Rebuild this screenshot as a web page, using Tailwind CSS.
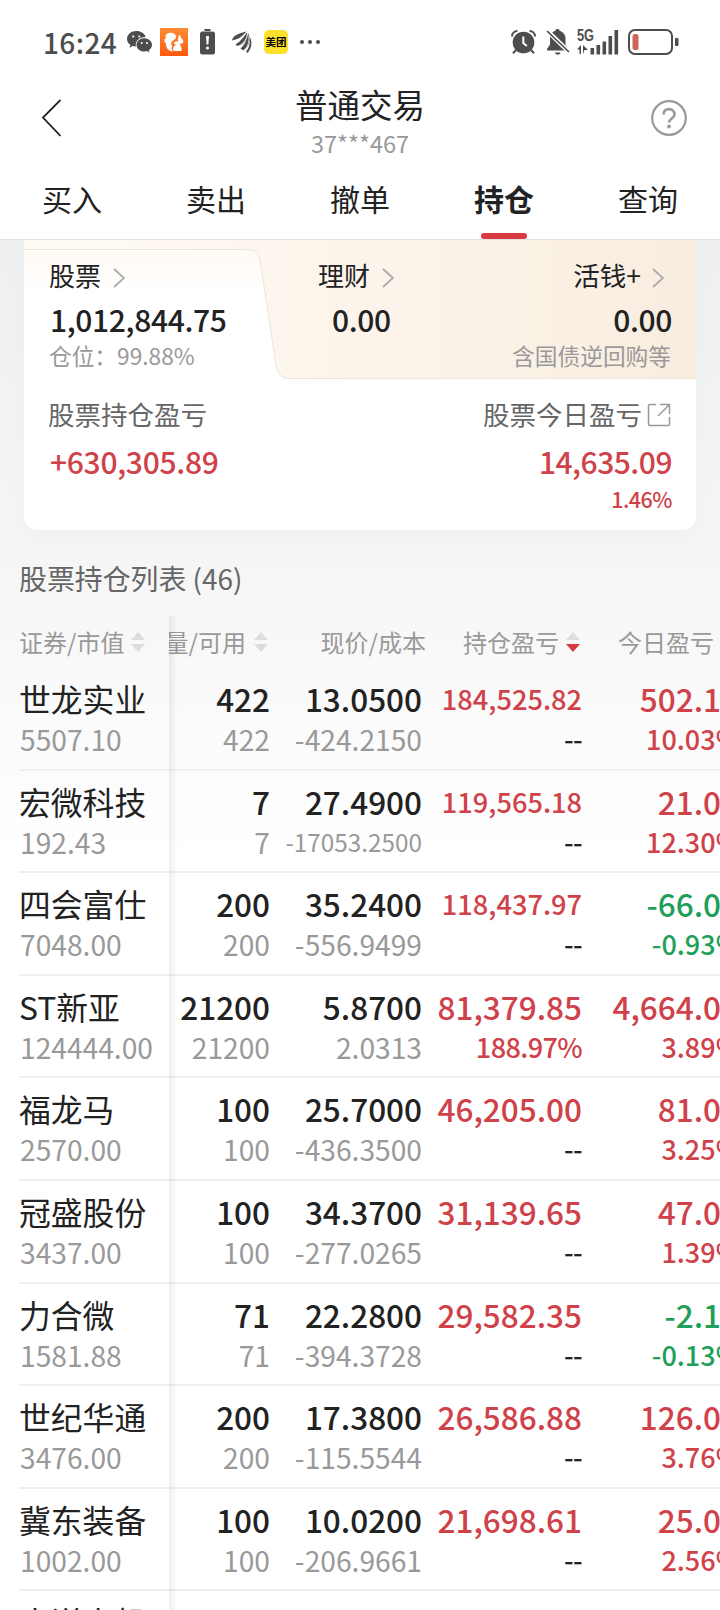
<!DOCTYPE html>
<html lang="zh-CN">
<head>
  <meta charset="UTF-8">
  <meta name="viewport" content="width=device-width, initial-scale=1.0">
  <title>普通交易</title>
  <script src="https://cdn.jsdelivr.net/npm/@tailwindcss/browser@4"></script>
</head>
<body class="w-[720px] h-[1610px] overflow-hidden bg-white font-['Noto_Sans_CJK_SC',sans-serif] text-[#222]">

  <!-- Status bar -->
  <div class="h-[84px] flex items-center justify-between pl-[43px] pr-[41px] text-[#4d4d4d]">
    <div class="flex items-center">
      <span class="w-[79px] text-[28px] leading-none font-medium tracking-[.4px] whitespace-nowrap">16:24</span>
      <svg class="w-[26px] h-[22px] ml-[5px]" viewBox="0 0 26 22" fill="currentColor">
        <path d="M9.500 0C4.200 0 0 3.500 0 7.900c0 2.500 1.300 4.600 3.400 6l-.9 2.800 3.300-1.600c1.100.3 2.100.5 3.200.5C7.700 10.600 12 6 18.600 6 17.700 2.500 14 0 9.500 0z" />
        <path d="M17.300 7.300c-4.500 0-7.800 3-7.800 6.600s3.500 6.600 7.800 6.600c.9 0 1.800-.1 2.600-.4l2.500 1.400-.7-2.300c2-1.200 3.300-3.100 3.300-5.300 0-3.600-3.400-6.600-7.700-6.600z" />
        <g fill="#fff"><circle cx="6.200" cy="5.500" r="1.100" /><circle cx="12.300" cy="5.500" r="1.100" /><circle cx="14.700" cy="12" r="1" /><circle cx="20" cy="12" r="1" /></g>
      </svg>
      <svg class="w-7 h-7 ml-[7px]" viewBox="0 0 28 28">
        <defs><linearGradient id="uc" x1="0" y1="0" x2="0" y2="1"><stop offset="0" stop-color="#ff8c32" /><stop offset="1" stop-color="#fb5a10" /></linearGradient></defs>
        <path d="M0 0h28v28H0z" fill="url(#uc)" />
        <path d="M8.500 5c3.500-1 7 .2 7.500 3.500.4 2.500-2.500 3.500-4 5-1.500 1.600-1 3.500.5 4.500-1 2-1.500 3.500.5 5.500C8.500 23.500 5.500 19.500 6 15 3.500 13.500 4 11 6 10 4.800 7.500 6.500 5.500 8.500 5z" fill="#fff" />
        <path d="M20 6.500l.8 3c2 1.500 3 3.500 2.200 5.500-1 .8-2.500.8-3.500.7 1.500 2 2.500 4.500 2 7.300h-7.700c-1.800-2.500 0-6 3.200-6-2 0-3-1-3.500-2.500 2-.5 3.500-1.500 4.500-3 0-2 .7-4 2-5z" fill="#fff" />
        <circle cx="17.500" cy="12.500" r="1" fill="#fb7a20" />
      </svg>
      <svg class="w-[15px] h-[26px] ml-[12px]" viewBox="0 0 15 26" fill="currentColor">
        <path d="M4.500 0h6v2h-6z" /><rect y="2.500" width="15" height="23" rx="2.500" />
        <path d="M6 7h3l-.6 8.500H6.600z" fill="#fff" /><circle cx="7.500" cy="19" r="1.600" fill="#fff" />
      </svg>
      <svg class="w-5 h-[22px] ml-[17px]" viewBox="0 0 20 22" fill="currentColor">
        <path d="M0 9.500C1 4.500 6 2.500 14.500.5 11 4 8.500 8 0 9.500z" /><path d="M3.500 13.500C9 10 12.500 5 15 .5 17 7 11.500 14.500 5.500 15z" /><path d="M8.500 17.500C13 13.500 15.500 8 15.800 1.500 20 8.500 17 16 11.500 19.500z" /><path d="M14 20.500c3.500-4 4.500-9 3.500-15C20.500 10.500 20 17 15.500 22z" />
        <path d="M1 10C8 9 12 5.500 15 .8M6 15.500C12.500 12 15.500 7 15.500 1M12 19.500c4-4 5.500-9 4.800-15" fill="none" stroke="#fff" stroke-width=".8" />
      </svg>
      <div class="w-6 h-6 ml-[12px] rounded-[5px] bg-[#fde02b] text-black text-[10.500px] leading-6 font-bold text-center">美团</div>
      <div class="flex gap-[4px] ml-[12px]">
        <i class="size-[4px] rounded-full bg-[#4d4d4d]"></i><i class="size-[4px] rounded-full bg-[#4d4d4d]"></i><i class="size-[4px] rounded-full bg-[#4d4d4d]"></i>
      </div>
    </div>
    <div class="flex items-center">
      <svg class="w-[25px] h-[24px]" viewBox="0 0 25 24" fill="currentColor">
        <circle cx="12.500" cy="12.500" r="10.800" /><path d="M1 6.500C1 3 3.500 1 6.500 1M24 6.500C24 3 21.500 1 18.500 1M5 20l-3 3.200M20 20l3 3.200" fill="none" stroke="currentColor" stroke-width="2" />
        <path d="M12.300 6.500v6.500l3.500 3" fill="none" stroke="#fff" stroke-width="2" />
      </svg>
      <svg class="w-6 h-[26px] ml-[10px]" viewBox="0 0 24 26" fill="currentColor">
        <path d="M9.500 1.500c0-2 4-2 4 0 4 1.500 6 4.500 6 8v6l2.500 4.500v1.500H1V20l3-4.500v-6c0-3.500 1.500-6.500 5.500-8zM9 23.500h5.500c-.5 3-5 3-5.500 0z" />
        <path d="M2 2.500l21.500 21" stroke="#fff" stroke-width="4.500" /><path d="M1 2l22 21" stroke="currentColor" stroke-width="1.700" />
      </svg>
      <svg class="w-[43px] h-[26px] ml-[7px]" viewBox="0 0 43 26" fill="currentColor">
        <text x="0" y="12" font-size="16" font-weight="700" font-family="Liberation Sans, sans-serif" textLength="17" lengthAdjust="spacingAndGlyphs">5G</text>
        <path d="M0 20.500l4-4.500v9H2.500v-4.500zM6 16l5 5h-3.500L6 25z" /><rect x="13.500" y="19" width="3.600" height="6.500" /><rect x="19.500" y="16" width="3.600" height="9.500" /><rect x="25.500" y="12.500" width="3.600" height="13" /><rect x="31.500" y="7" width="3.600" height="18.500" /><rect x="37.500" y="1" width="3.600" height="24.500" />
      </svg>
      <svg class="w-[51px] h-[26px] ml-[8px]" viewBox="0 0 51 26">
        <rect x="1" y="1" width="43" height="24" rx="6" fill="none" stroke="#4d4d4d" stroke-width="2" /><rect x="4.500" y="5" width="6" height="16" rx="2.500" fill="#d0635c" /><rect x="47" y="9" width="3.500" height="8" rx="1" fill="#4d4d4d" />
      </svg>
    </div>
  </div>

  <!-- Title bar -->
  <header class="h-[78px] flex items-center justify-between pl-[41px] pr-[33px]">
    <svg class="w-5 h-[38px] mt-[-11px]" viewBox="0 0 20 38" fill="none" stroke="#222" stroke-width="1.800"><path d="M19.500 1L2 18.500 19.500 37" /></svg>
    <div class="flex flex-col items-center ml-[8px] mt-[-5px]">
      <h1 class="h-[42px] text-[32.500px] leading-[42px]">普通交易</h1>
      <p class="h-[34px] text-[23.500px] leading-[36px] text-[#999]">37***467</p>
    </div>
    <svg class="size-9 mt-[-11px]" viewBox="0 0 36 36" fill="none" stroke="#999" stroke-width="2.200">
      <circle cx="18" cy="18" r="16.800" /><path d="M12.500 14.500c0-7.500 11-7 11 0 0 4-5.500 4-5.500 8" stroke-width="2.700" /><circle cx="18" cy="26.500" r="1.500" fill="#999" stroke-width="1" />
    </svg>
  </header>

  <nav class="h-[78px] grid grid-cols-5 border-b border-[#dfe1e3] text-[30px] leading-[73px] text-center">
    <span>买入</span>
    <span>卖出</span>
    <span>撤单</span>
    <span class="relative font-bold">持仓<i class="absolute bottom-0 left-1/2 w-[46px] h-[6px] -translate-x-1/2 rounded-full bg-[#d83a40]"></i></span>
    <span>查询</span>
  </nav>

  <main class="h-[1370px] overflow-hidden bg-linear-to-b from-[#edeff0] via-[#f5f5f5] via-[300px] to-white to-[620px]">
    <!-- Asset card -->
    <section class="relative h-[290px] mx-6 rounded-b-[14px] bg-white overflow-hidden shadow-[0_8px_24px_rgba(0,0,0,.02)]">
      <svg class="absolute inset-0 w-[672px] h-[140px]" viewBox="0 0 672 140">
        <defs>
          <linearGradient id="gold" x1="0" x2="1"><stop offset=".1" stop-color="#fffaf4" /><stop offset="1" stop-color="#f8eddf" /></linearGradient>
          <linearGradient id="tab" x1="0" y1="0" x2="0" y2="1"><stop offset="0" stop-color="#fffaf4" /><stop offset=".35" stop-color="#fff" /></linearGradient>
        </defs>
        <path d="M0 0h672v139H0z" fill="url(#gold)" />
        <path d="M0 9.500h225q9 0 11 10l16 106q2 13 13 13h407V140H0z" fill="url(#tab)" />
        <path d="M0 9.500h225q9 0 11 10l16 106q2 13 13 13h407" fill="none" stroke="#eee4d7" />
      </svg>
      <div class="relative h-[139px] flex justify-between pt-[15px] pl-[25px] pr-6">
        <div class="w-[240px]">
          <p class="flex items-center gap-[12px] h-[42px] text-[26px]"><span class="mt-[-3px]">股票</span><svg class="w-3 h-5 mt-[3px]" viewBox="0 0 12 20" fill="none" stroke="#aaa" stroke-width="1.800"><path d="M1 1l10 9-10 9" /></svg></p>
          <p class="h-[44px] pl-[1px] text-[30px] leading-[44px] font-medium tracking-[-.35px]">1,012,844.75</p>
          <p class="h-[30px] text-[22.700px] leading-[29px] text-[#999]">仓位：99.88%</p>
        </div>
        <div class="flex-1 pl-[29px]">
          <p class="flex items-center gap-[12px] h-[42px] text-[26px]"><span class="mt-[-3px]">理财</span><svg class="w-3 h-5 mt-[3px]" viewBox="0 0 12 20" fill="none" stroke="#aaa" stroke-width="1.800"><path d="M1 1l10 9-10 9" /></svg></p>
          <p class="h-[44px] pl-[14px] text-[30px] leading-[44px] font-medium tracking-[-.35px]">0.00</p>
        </div>
        <div class="flex flex-col items-end">
          <p class="flex items-center gap-[11px] h-[42px] pr-[8px] text-[26.500px]"><span class="mt-[-3px]">活钱+</span><svg class="w-3 h-5 mt-[3px]" viewBox="0 0 12 20" fill="none" stroke="#aaa" stroke-width="1.800"><path d="M1 1l10 9-10 9" /></svg></p>
          <p class="h-[44px] text-[30px] leading-[44px] font-medium tracking-[-.35px]">0.00</p>
          <p class="h-[30px] pr-[1px] text-[22.700px] leading-[29px] text-[#999]">含国债逆回购等</p>
        </div>
      </div>
      <div class="flex justify-between pt-[13px] pl-[24px] pr-6">
        <div>
          <p class="h-[46px] text-[26.500px] leading-[44px] text-[#666]">股票持仓盈亏</p>
          <p class="h-[46px] pl-[2px] text-[30px] leading-[46px] font-medium tracking-[-.3px] text-[#d0424a]">+630,305.89</p>
        </div>
        <div class="flex flex-col items-end">
          <p class="flex items-center gap-[5px] h-[46px] pr-[1px] text-[26.500px] leading-[44px] text-[#666]"><span class="mt-[-2px]">股票今日盈亏</span><svg class="w-6 h-6" viewBox="0 0 24 24" fill="none" stroke="#999" stroke-width="1.500"><path d="M9 1.500H3q-1.500 0-1.500 1.500v18q0 1.500 1.500 1.500h18q1.500 0 1.500-1.500v-7M13 1.500h9.500V11M22 2L11 13" /></svg></p>
          <p class="h-[46px] text-[30px] leading-[46px] font-medium tracking-[-.5px] text-[#d0424a]">14,635.09</p>
          <p class="h-[30px] text-[21.500px] leading-[29px] font-medium tracking-[-.5px] text-[#d0424a]">1.46%</p>
        </div>
      </div>
    </section>

    <h2 class="h-[86px] pt-[26px] pl-[19px] text-[27.900px] leading-[44px] text-[#666]">股票持仓列表 (46)</h2>

    <div class="flex h-[1000px]">
      <div class="w-[169px] shrink-0">
        <div class="flex items-center gap-[7px] h-[52px] pl-[19px] text-[24px] text-[#999]">证券/市值<svg class="w-[14px] h-5" viewBox="0 0 14 20" fill="#ddd"><path d="M7 0l7 8H0zM7 20l7-8H0z" /></svg></div>
        <div id="names"></div>
      </div>
      <div class="relative flex-1 overflow-hidden">
        <div class="flex items-center h-[52px] text-[24px] text-[#999] whitespace-nowrap">
          <span class="flex items-center justify-end gap-[8px] w-[99px]">数量/可用<svg class="w-[14px] h-5 shrink-0" viewBox="0 0 14 20" fill="#ddd"><path d="M7 0l7 8H0zM7 20l7-8H0z" /></svg></span>
          <span class="w-[158px] text-right">现价/成本</span>
          <span class="flex items-center justify-end gap-[7px] w-[154px]">持仓盈亏<svg class="w-[14px] h-5" viewBox="0 0 14 20" fill="#ddd"><path d="M7 0l7 8H0z" /><path d="M7 20l7-8H0z" fill="#d83a40" /></svg></span>
          <span class="w-[134px] text-right">今日盈亏</span>
        </div>
        <div id="cells" class="w-[600px]"></div>
        <div class="absolute inset-y-0 left-0 w-[8px] bg-linear-to-r from-black/7 to-transparent"></div>
      </div>
    </div>
  </main>

  <script>
    // name, market value, amount, available, price, cost, profit, profit rate, today, today rate
    const rows = [
      ["世龙实业", "5507.10", "422", "422", "13.0500", "-424.2150", "184,525.82", "--", "502.1", "10.03%"],
      ["宏微科技", "192.43", "7", "7", "27.4900", "-17053.2500", "119,565.18", "--", "21.0", "12.30%"],
      ["四会富仕", "7048.00", "200", "200", "35.2400", "-556.9499", "118,437.97", "--", "-66.0", "-0.93%"],
      ["ST新亚", "124444.00", "21200", "21200", "5.8700", "2.0313", "81,379.85", "188.97%", "4,664.0", "3.89%"],
      ["福龙马", "2570.00", "100", "100", "25.7000", "-436.3500", "46,205.00", "--", "81.0", "3.25%"],
      ["冠盛股份", "3437.00", "100", "100", "34.3700", "-277.0265", "31,139.65", "--", "47.0", "1.39%"],
      ["力合微", "1581.88", "71", "71", "22.2800", "-394.3728", "29,582.35", "--", "-2.1", "-0.13%"],
      ["世纪华通", "3476.00", "200", "200", "17.3800", "-115.5544", "26,586.88", "--", "126.0", "3.76%"],
      ["冀东装备", "1002.00", "100", "100", "10.0200", "-206.9661", "21,698.61", "--", "25.0", "2.56%"],
      ["大洋电机", "", "", "", "", "", "", "", "", ""],
    ];

    const red = "text-[#d0424a]";
    const green = "text-[#1fa05a]";

    document.getElementById("names").innerHTML = rows.map(r => `
      <div class="h-[102.6px] ml-[19px] border-b-2 border-[#efefef] pt-[8px] whitespace-nowrap">
        <p class="h-[43px] text-[31.8px] leading-[44px]">${r[0]}</p>
        <p class="h-[38px] pl-[1px] text-[28.2px] leading-[40px] text-[#999]">${r[1]}</p>
      </div>`).join("");

    document.getElementById("cells").innerHTML = rows.map(r => {
      const today = r[8].startsWith("-") ? green : red;
      // long figures are set smaller so that they fit the column
      const profit = r[6].length > 9 ? "text-[27.2px]" : "text-[31.5px]";
      const cost = r[5].length > 10 ? "text-[24.3px]" : "text-[28.2px]";
      return `
      <div class="flex h-[102.6px] border-b-2 border-[#efefef] pt-[8px] text-right whitespace-nowrap font-medium">
        <div class="w-[101px]">
          <p class="h-[43px] text-[31.5px] leading-[44px]">${r[2]}</p>
          <p class="h-[38px] text-[28.2px] leading-[40px] font-normal text-[#999]">${r[3]}</p>
        </div>
        <div class="w-[152px]">
          <p class="h-[43px] text-[31.5px] leading-[44px]">${r[4]}</p>
          <p class="h-[38px] ${cost} leading-[40px] font-normal text-[#999]">${r[5]}</p>
        </div>
        <div class="w-[160px] ${red}">
          <p class="h-[43px] ${profit} leading-[44px]">${r[6]}</p>
          <p class="h-[38px] text-[27px] leading-[40px] tracking-[-.6px] ${r[7] === "--" ? "text-[#222]" : ""}">${r[7]}</p>
        </div>
        <div class="w-[139px] ${today}">
          <p class="h-[43px] text-[31.5px] leading-[44px]">${r[8]}</p>
          <p class="h-[38px] mr-[-20px] text-[27px] leading-[40px]">${r[9]}</p>
        </div>
      </div>`;
    }).join("");
  </script>
</body>
</html>
